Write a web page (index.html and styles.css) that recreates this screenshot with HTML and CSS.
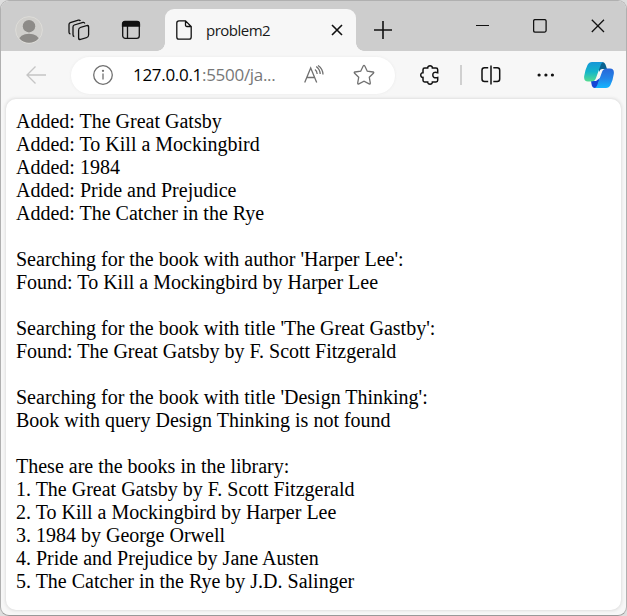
FILE: index.html
```
<!DOCTYPE html>
<html lang="en">
<head>
<meta charset="utf-8">
<title>problem2</title>
<link rel="stylesheet" href="styles.css">
</head>
<body>
<div class="window">
  <header class="titlebar">
    <svg class="avatar" width="28" height="28" viewBox="0 0 28 28">
      <defs><clipPath id="face"><circle cx="14" cy="14" r="12.8"/></clipPath></defs>
      <circle cx="14" cy="14" r="13.4" fill="#d0cfcc" stroke="#dddcd8"/>
      <g clip-path="url(#face)" fill="#8d8b88"><circle cx="14" cy="10.2" r="6.2"/><ellipse cx="14" cy="25" rx="10.5" ry="7.3"/></g>
    </svg>
    <svg class="icon stack" width="22" height="22" viewBox="0 0 22 22">
      <rect x="-5" y="-6" width="10" height="12" rx="2" transform="matrix(1 -.3 0 1 15.6 13.5)"/>
      <path d="M6.300 17.500Q5 17.300 5 15.700V8Q5 6.600 6.300 6L15 3.400Q16.400 3.100 16.800 4.500M2.400 15Q1 14.700 1 13.200V5.600Q1 4.200 2.300 3.700L10.300 1.200Q11.800.8 12.400 2"/>
    </svg>
    <svg class="icon panel-icon" width="20" height="20" viewBox="0 0 20 20">
      <rect x="1.700" y="1.700" width="16.600" height="16.600" rx="2.600"/><path d="M1.500 6V4Q1.500 1.500 4 1.500H16Q18.500 1.500 18.500 4V6Z" fill="#111"/><path d="M6.500 6V18"/>
    </svg>
    <div class="tab">
      <svg class="icon" width="16" height="20" viewBox="0 0 16 20"><path d="M3 .8H9.500L15.200 6.500V17Q15.200 19.200 13 19.200H3Q.8 19.200.8 17V3Q.8.8 3 .8ZM9.500.8V5Q9.500 6.500 11 6.500H15.200"/></svg>
      <span class="tab-title">problem2</span>
      <svg class="icon tab-close" width="12" height="12" viewBox="0 0 12 12"><path d="M1 1L11 11M11 1L1 11"/></svg>
    </div>
    <svg class="icon plus" width="18" height="18" viewBox="0 0 18 18"><path d="M9 0V18M0 9H18"/></svg>
    <div class="controls">
      <svg class="icon" width="13" height="14" viewBox="0 0 13 14"><path d="M0 6.500H13" stroke-width="1"/></svg>
      <svg class="icon" width="14" height="14" viewBox="0 0 14 14"><rect x=".6" y=".6" width="12.500" height="12.500" rx="1.500"/></svg>
      <svg class="icon" width="14" height="14" viewBox="0 0 14 14"><path d="M.8.8L13 13M13 .8L.8 13"/></svg>
    </div>
  </header>
  <div class="toolbar">
    <svg class="icon back" width="20" height="18" viewBox="0 0 20 18"><path d="M20 9H1M9.500.5L1 9L9.500 17.500"/></svg>
    <div class="address">
      <svg class="icon gray" width="20" height="20" viewBox="0 0 20 20"><circle cx="10" cy="10" r="9.300"/><path d="M10 8.500V14.500"/><circle cx="10" cy="5.800" r=".5" fill="#666"/></svg>
      <span class="url">127.0.0.1<span class="path">:5500/ja...</span></span>
      <svg class="icon gray read" width="20" height="20" viewBox="0 0 20 20"><path d="M.7 17.500L6.700 3L12.700 17.500M2.800 12.500H10.600M11 4.500Q13 6 13.200 9M12.200 1.500Q16 4.200 16.200 9M14 .5Q18.700 3.500 19 9.500"/></svg>
      <svg class="icon gray" width="22" height="22" viewBox="0 0 22 22"><path d="M10.200 2Q11 .7 11.800 2L14.300 7.200L20 8Q21.300 8.300 20.400 9.300L16.300 13.300L17.300 19Q17.400 20.300 16.100 19.900L11 17.200L5.900 19.900Q4.600 20.300 4.700 19L5.700 13.300L1.600 9.300Q.7 8.300 2 8L7.700 7.200Z"/></svg>
    </div>
    <svg class="icon puzzle" width="20" height="20" viewBox="0 0 20 20"><path d="M4.700 3.100H7.700C7.500 0 12.600 0 12.400 3.100H16Q17.700 3.100 17.700 4.800V7.700C14 6.700 12.800 8 12.800 10S14 13.300 17.700 12.400V15.200Q17.700 16.900 16 16.900H12.400C12.600 20 7.500 20 7.700 16.900H4.700Q3 16.900 3 15.200V12.400C0 12.600 0 7.500 3 7.700V4.800Q3 3.100 4.700 3.100Z"/></svg>
    <span class="divider"></span>
    <svg class="icon split" width="20" height="20" viewBox="0 0 20 20"><path d="M10 .5V19.500M7.200 2.800H3.500Q1 2.800 1 5.300V14Q1 16.500 3.500 16.500H7.200M12.300 2.800H16.200Q18.700 2.800 18.700 5.300V14Q18.700 16.500 16.200 16.500H12.300"/></svg>
    <svg class="dots" width="18" height="4" viewBox="0 0 18 4"><circle cx="2.100" cy="2" r="1.600"/><circle cx="8.900" cy="2" r="1.600"/><circle cx="15.400" cy="2" r="1.600"/></svg>
    <svg class="copilot" width="30" height="28" viewBox="0 0 30 28">
      <defs>
        <linearGradient id="a" x1="0" y1="0" x2="0" y2="1"><stop stop-color="#1696d8"/><stop offset=".5" stop-color="#13b5ca"/><stop offset="1" stop-color="#55dc91"/></linearGradient>
        <linearGradient id="b" x1="0" y1="0" x2="0" y2="1"><stop stop-color="#2867d9"/><stop offset=".5" stop-color="#2383e7"/><stop offset="1" stop-color="#13b5ff"/></linearGradient>
      </defs>
      <path d="M15 1H18Q21 1 22 5L23 8H18Q16 8 15 11Z" fill="#096290"/>
      <path d="M7 20H12L16 17L13 27H11Q8 27 7.500 23Z" fill="#1546d5"/>
      <path d="M8 1H19Q17 2 16 6L12 17Q11 20.500 7 20.500H4Q-.5 20.500.2 15Q1 9 3.500 4Q5 1 8 1Z" fill="url(#a)"/>
      <path d="M22 27H11Q13 26 14 22L18 11Q19 7.500 23 7.500H26Q30.500 7.500 29.800 13Q29 19 26.500 24Q25 27 22 27Z" fill="url(#b)"/>
    </svg>
  </div>
  <main class="page">Added: The Great Gatsby
Added: To Kill a Mockingbird
Added: 1984
Added: Pride and Prejudice
Added: The Catcher in the Rye

Searching for the book with author 'Harper Lee':
Found: To Kill a Mockingbird by Harper Lee

Searching for the book with title 'The Great Gastby':
Found: The Great Gatsby by F. Scott Fitzgerald

Searching for the book with title 'Design Thinking':
Book with query Design Thinking is not found

These are the books in the library:
1. The Great Gatsby by F. Scott Fitzgerald
2. To Kill a Mockingbird by Harper Lee
3. 1984 by George Orwell
4. Pride and Prejudice by Jane Austen
5. The Catcher in the Rye by J.D. Salinger</main>
</div>
</body>
</html>
```

FILE: styles.css
```
* { box-sizing: border-box; }
body { margin: 0; background: #dedede; }
svg { display: block; flex: none; }
.window {
  width: 627px;
  height: 616px;
  display: flex;
  flex-direction: column;
  padding-bottom: 5px;
  border: 1px solid #b0b0b0;
  border-bottom-color: #999;
  border-radius: 9px;
  background: #f7f7f7;
  overflow: hidden;
}
.titlebar {
  height: 50px;
  flex: none;
  display: flex;
  align-items: center;
  padding: 8px 21px 0 14px;
  background: #cdcdcd;
}
.icon { fill: none; stroke: #111; stroke-width: 1.3; }
.stack { margin-left: 25px; }
.panel-icon { margin-left: 31px; }
.tab {
  position: relative;
  width: 191px;
  height: 42px;
  flex: none;
  display: flex;
  align-items: center;
  margin-left: 24px;
  padding: 0 13px 0 11px;
  border-radius: 9px 9px 0 0;
  background: #f7f7f7;
}
.tab::before, .tab::after {
  content: "";
  position: absolute;
  bottom: 0;
  width: 8px;
  height: 8px;
}
.tab::before { left: -8px; background: radial-gradient(circle at 0 0, transparent 7.5px, #f7f7f7 8px); }
.tab::after { right: -8px; background: radial-gradient(circle at 100% 0, transparent 7.5px, #f7f7f7 8px); }
.tab-title {
  margin-left: 14px;
  font: 15px/20px "Open Sans", sans-serif;
  letter-spacing: -0.5px;
  color: #191919;
}
.tab-close { margin-left: auto; stroke-width: 1.6; }
.plus { margin-left: 18px; stroke-width: 1.6; }
.controls { display: flex; gap: 44px; margin: -9px 0 0 auto; }
.toolbar {
  height: 48px;
  flex: none;
  display: flex;
  align-items: center;
  padding: 0 12px 0 25px;
}
.back { stroke: #c5c5c5; }
.address {
  width: 324px;
  height: 37px;
  flex: none;
  display: flex;
  align-items: center;
  margin-left: 25px;
  padding: 0 20px 0 22px;
  border-radius: 19px;
  background: #fff;
  box-shadow: 0 0 3px #e9e9e9;
}
.gray { stroke: #707070; }
.url {
  width: 145px;
  margin: 0 26px 0 20px;
  font: 17px/24px "Open Sans", sans-serif;
  letter-spacing: -0.3px;
  white-space: nowrap;
  color: #000;
}
.path { color: #777; }
.read { margin-right: 29px; }
.puzzle { margin-left: 25px; stroke-width: 1.5; }
.divider { width: 2px; height: 20px; margin-left: 20px; background: #d0d0d0; }
.split { margin-left: 19px; stroke-width: 1.5; }
.dots { margin-left: 36px; fill: #111; }
.copilot { margin-left: auto; }
.page {
  flex: 1;
  margin: 0 5px 0 5px;
  padding: 11px 10px 0;
  border-radius: 10px;
  background: #fff;
  box-shadow: 0 0 3px 1px #dfdfdf;
  font: 20px/23px "Liberation Serif", serif;
  color: #000;
  white-space: pre;
}
```
